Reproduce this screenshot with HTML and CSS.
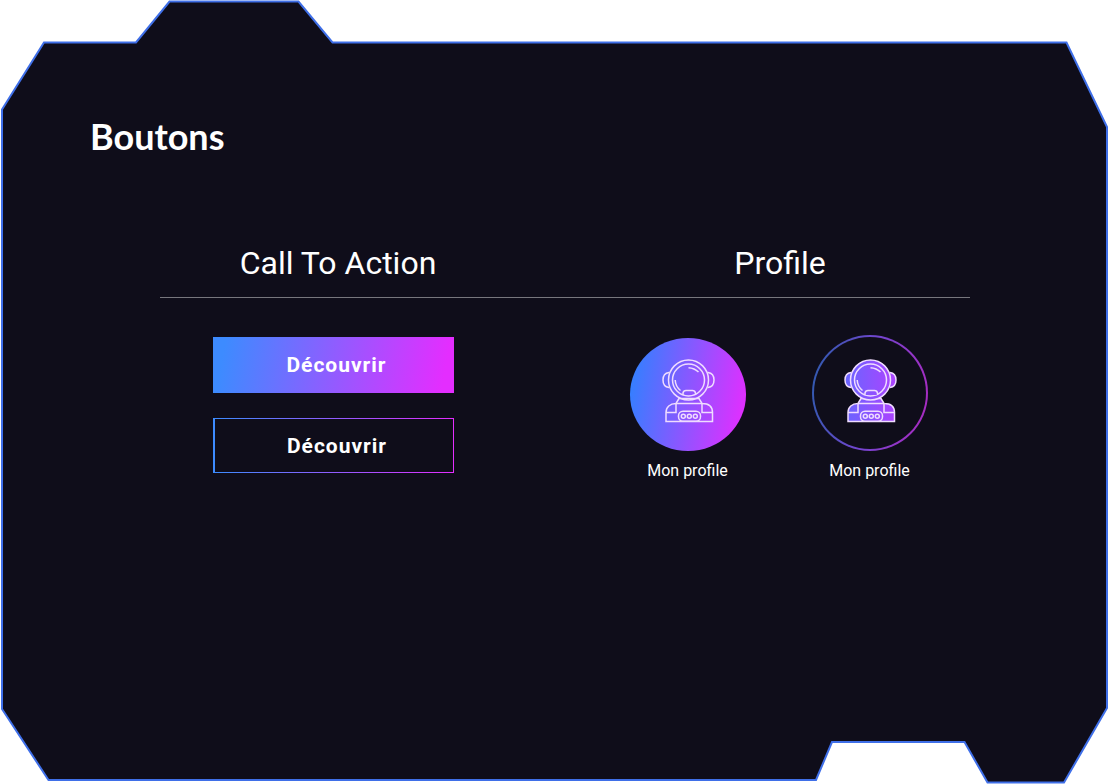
FILE: index.html
```html
<!DOCTYPE html>
<html lang="fr">
<head>
    <meta charset="utf-8" />
    <meta name="viewport" content="width=device-width, initial-scale=1" />
    <title>Boutons</title>
    <link rel="stylesheet" href="styles.css">
</head>
<body>
    <!-- Shared gradients and the astronaut icon -->
    <svg class="defs" width="0" height="0" aria-hidden="true">
        <defs>
            <linearGradient id="neon" gradientUnits="userSpaceOnUse" x1="-32" y1="0" x2="84" y2="0">
                <stop offset="0" stop-color="#3d7bff" />
                <stop offset="1" stop-color="#d82dff" />
            </linearGradient>
            <symbol id="astronaut" viewBox="0 0 54 66">
                <path d="M7 13.500C3 14 1 17 1 21S3 28 7 28.500M46 13.500C50 14 52 17 52 21S50 28 46 28.500" />
                <path d="M17 39.500L14 44.500C8 44.500 4 48 4 53.500V62.500H50.500V53.500C50.500 48 47 44.500 40 44.500L37 39.500Z" />
                <path d="M14 44.500H40M14 44.500V53.500H4M40 44.500V53.500H50.500" />
                <circle cx="26.500" cy="21" r="20" />
                <circle cx="26.500" cy="21" r="16" />
                <path d="M21 36V34Q21.500 31.500 24 31.500H30.500Q33 31.500 33.500 34V36" />
                <path class="shine" d="M26.500 8.700Q32.500 9 36.500 13M13.200 21Q13.500 27.500 18.500 31.500" />
                <rect x="16.500" y="52.300" width="22" height="10" rx="4.500" />
                <circle cx="21.300" cy="57.300" r="2" />
                <circle cx="27.300" cy="57.300" r="2" />
                <circle cx="33.300" cy="57.300" r="2" />
            </symbol>
        </defs>
    </svg>

    <main class="panel">
        <svg class="frame" viewBox="0 0 1109 784" preserveAspectRatio="none" aria-hidden="true">
            <path d="M2 109.500L44 42.500H136L169.500 1.500H298.500L332.500 42.500H1066.500L1107 127V708L1064 782.500H987.500L964.500 742H832L816 780H48.500L2 709Z" />
        </svg>

        <h1>Boutons</h1>

        <section class="showcase">
            <div class="columns headings">
                <h2 id="cta">Call To Action</h2>
                <h2 id="profile">Profile</h2>
            </div>
            <hr>
            <div class="columns">
                <div class="cta-list" role="group" aria-labelledby="cta">
                    <button type="button" class="btn btn-full">Découvrir</button>
                    <button type="button" class="btn btn-outline">Découvrir</button>
                </div>
                <div class="profile-list" role="group" aria-labelledby="profile">
                    <button type="button" class="profile">
                        <span class="avatar avatar-full">
                            <svg class="astronaut" aria-hidden="true"><use href="#astronaut" /></svg>
                        </span>
                        <span>Mon profile</span>
                    </button>
                    <button type="button" class="profile">
                        <span class="avatar avatar-outline">
                            <svg class="astronaut filled" aria-hidden="true"><use href="#astronaut" /></svg>
                        </span>
                        <span>Mon profile</span>
                    </button>
                </div>
            </div>
        </section>
    </main>
</body>
</html>
```

FILE: styles.css
```css
:root {
    --dark: #0f0d1a;
    --neon: linear-gradient(100deg, #3d8bff 5%, #e42dff 95%);
}
* {
    box-sizing: border-box;
}
body {
    margin: 0;
    background: #fff;
    color: #fff;
    font-family: Roboto, "Liberation Sans", sans-serif;
}
.defs {
    position: absolute;
}

/* Cut-corner panel, the frame stretches behind the content */
.panel {
    position: relative;
    min-height: 100vh;
    padding: 113px 108px 0 111px;
}
.frame {
    position: absolute;
    inset: 0;
    z-index: -1;
    width: 100%;
    height: 100%;
}
.frame path {
    fill: var(--dark);
    stroke: #3f6fe8;
    stroke-width: 2px;
    vector-effect: non-scaling-stroke;
}

h1 {
    margin: 0 0 0 -21px;
    font: bold 36px/46px Lato, sans-serif;
}
.showcase {
    margin-top: 83px;
}
.columns {
    display: grid;
    grid-template-columns: 1fr 1fr;
    text-align: center;
}
.headings {
    padding-left: 6px;
}
h2 {
    margin: 0;
    font-size: 32px;
    font-weight: 400;
    line-height: 42px;
}
hr {
    height: 1px;
    margin: 13px 31px 37px 49px;
    border: 0;
    background: #77767d;
}

/* Buttons */
button {
    border: 0;
    background: none;
    color: inherit;
    font-family: inherit;
    cursor: pointer;
}
.cta-list {
    display: flex;
    flex-direction: column;
    align-items: center;
    gap: 25px;
    padding-top: 2px;
}
.btn {
    width: 241px;
    height: 56px;
    padding: 0 0 0 6px;
    font-size: 21px;
    font-weight: 700;
    letter-spacing: 1px;
}
.btn-full {
    background: var(--neon);
}
.btn-outline {
    height: 55px;
    border: solid transparent;
    border-width: 1px 1px 1px 2px;
    border-image: linear-gradient(90deg, #3d8bff, #e42dff) 1;
}

/* Profile */
.profile-list {
    display: flex;
    justify-content: center;
    gap: 66px;
}
.profile {
    display: flex;
    flex-direction: column;
    align-items: center;
    gap: 10px;
    width: 116px;
    padding: 0;
    font-size: 16px;
    line-height: 20px;
    white-space: nowrap;
}
.avatar {
    display: grid;
    place-items: center;
    width: 116px;
    height: 116px;
    padding: 0 0 2px 2px;
    border: 2px solid transparent;
    border-radius: 50%;
}
.avatar-full {
    height: 113px;
    margin-top: 3px;
    padding-bottom: 5px;
    border: 0;
    background: linear-gradient(100deg, #3280ff 5%, #e42dff 95%);
}
.avatar-outline {
    background: linear-gradient(var(--dark), var(--dark)) padding-box, linear-gradient(100deg, #2a5cac, #7445d0 50%, #ae28c0) border-box;
}
.astronaut {
    width: 54px;
    height: 66px;
    fill: none;
    stroke: #efdcff;
    stroke-width: 1.5px;
}
.astronaut.filled {
    fill: url(#neon);
}
.shine {
    fill: none;
}
```
